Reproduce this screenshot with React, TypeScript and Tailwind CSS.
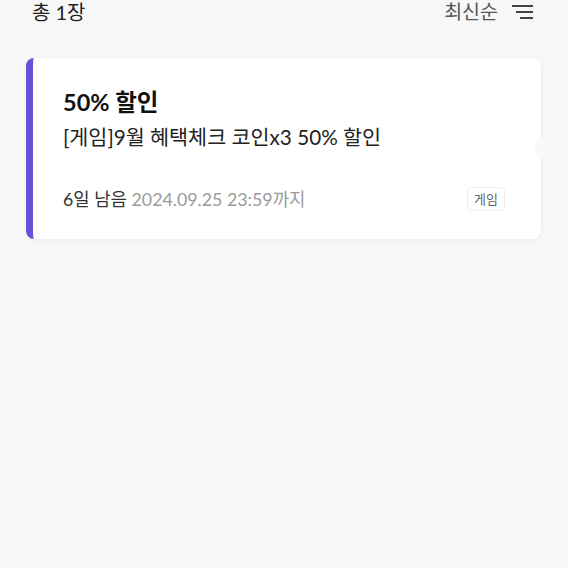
export default function App() {
  return (
    <div
      className="w-[568px] h-[568px] bg-[#f7f7f8] overflow-hidden"
      style={{ fontFamily: "Lato, 'Noto Sans CJK KR', sans-serif" }}
    >
      {/* header */}
      <div className="flex items-center justify-between pl-[32px] pr-[35px] h-[26px] -mt-[1px]">
        <span className="text-[20px] text-[#222]">총 1장</span>
        <div className="flex items-center gap-[14px]">
          <span className="text-[19.5px] text-[#555]">최신순</span>
          <svg width="21" height="16" viewBox="0 0 21 16">
            <rect x="0" y="1" width="21" height="2" fill="#444" />
            <rect x="4" y="7" width="17" height="2" fill="#444" />
            <rect x="8" y="13" width="13" height="2" fill="#444" />
          </svg>
        </div>
      </div>

      {/* coupon card */}
      <div className="relative mt-[33px] ml-[26px] w-[515px] h-[181px] bg-white rounded-lg border-l-[7px] border-[#6a4fdb] shadow-[0_1px_4px_rgba(0,0,0,0.05)] flex flex-col pl-[30px] pr-[36px]">
        <div className="mt-[28px] text-[23.5px] font-bold text-[#111] leading-[32px]">50% 할인</div>
        <div className="mt-[5px] text-[20.7px] text-[#222] leading-[28px]">[게임]9월 혜택체크 코인x3 50% 할인</div>
        <div className="mt-auto mb-[28px] flex items-center justify-between">
          <div className="text-[17.8px] leading-[24px]">
            <span className="text-[#333]">6일 남음</span>{" "}
            <span className="text-[#9a9a9a]">2024.09.25 23:59까지</span>
          </div>
          <span className="text-[13px] text-[#666] border border-[#efefef] rounded px-[6px] py-[3px] leading-[16px]">게임</span>
        </div>
        <div className="absolute right-[-6px] top-[81px] w-[12px] h-[18px] rounded-full bg-[#f9f9fa]" />
      </div>
    </div>
  );
}
